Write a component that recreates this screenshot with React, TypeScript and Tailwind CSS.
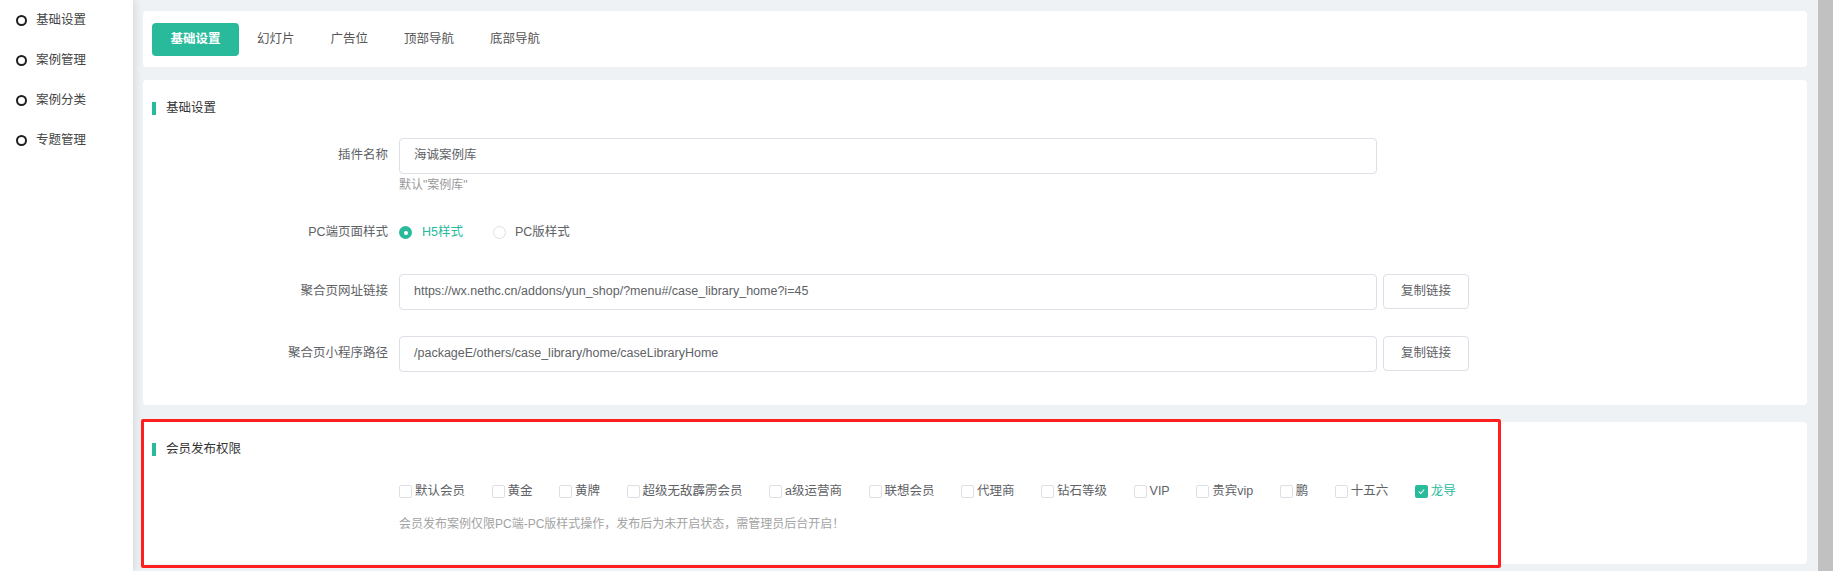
import React from "react";

const teal = "#29ba9c";

const sideItems = ["基础设置", "案例管理", "案例分类", "专题管理"];
const tabs = ["基础设置", "幻灯片", "广告位", "顶部导航", "底部导航"];
const levels = [
  "默认会员",
  "黄金",
  "黄牌",
  "超级无敌霹雳会员",
  "a级运营商",
  "联想会员",
  "代理商",
  "钻石等级",
  "VIP",
  "贵宾vip",
  "鹏",
  "十五六",
  "龙导",
];

export default function App() {
  return (
    <div
      className="flex h-[571px] w-[1833px] overflow-hidden bg-[#eff2f5] text-[12.5px] text-[#606266]"
      style={{ fontFamily: '"Liberation Sans", "Noto Sans CJK SC", sans-serif' }}
    >
      <aside className="relative z-10 w-[133px] shrink-0 bg-white shadow-[2px_0_8px_rgba(0,0,0,0.1)]">
        {sideItems.map((item) => (
          <div key={item} className="flex h-[40px] items-center">
            <span className="ml-[16px] h-[11px] w-[11px] rounded-full border-2 border-[#1f1f1f]" />
            <span className="ml-[9px] text-[#444]">{item}</span>
          </div>
        ))}
      </aside>

      <main className="flex min-w-0 flex-1 flex-col pl-[10px] pr-[11px] pt-[11px]">
        <div className="flex h-[56px] items-center rounded-[4px] bg-white pl-[9px]">
          {tabs.map((tab, i) => (
            <div
              key={tab}
              className={
                i === 0
                  ? "flex h-[33px] w-[87px] items-center justify-center rounded-[4px] bg-[#29ba9c] font-semibold text-white"
                  : "flex h-[33px] items-center px-[18px] text-[#555]"
              }
            >
              {tab}
            </div>
          ))}
        </div>

        <section className="mt-[13px] h-[325px] rounded-[4px] bg-white pt-[19px]">
          <SectionTitle>基础设置</SectionTitle>

          <div className="mt-[20px] flex">
            <Label>插件名称</Label>
            <div>
              <Input value="海诚案例库" />
              <p className="mt-[4px] text-[12px] leading-[14px] text-[#999]">默认"案例库"</p>
            </div>
          </div>

          <div className="mt-[34px] flex h-[14px] items-center">
            <Label>PC端页面样式</Label>
            <div className="flex items-center">
              <span className="flex h-[13px] w-[13px] items-center justify-center rounded-full bg-[#29ba9c]">
                <span className="h-[4px] w-[4px] rounded-full bg-white" />
              </span>
              <span className="ml-[10px] text-[#29ba9c]">H5样式</span>
              <span className="ml-[30px] h-[13px] w-[13px] rounded-full border border-[#dcdfe6]" />
              <span className="ml-[9px]">PC版样式</span>
            </div>
          </div>

          <div className="mt-[34px] flex items-center">
            <Label>聚合页网址链接</Label>
            <Input value="https://wx.nethc.cn/addons/yun_shop/?menu#/case_library_home?i=45" />
            <CopyButton />
          </div>

          <div className="mt-[26px] flex items-center">
            <Label>聚合页小程序路径</Label>
            <Input value="/packageE/others/case_library/home/caseLibraryHome" />
            <CopyButton />
          </div>
        </section>

        <section className="relative mt-[17px] h-[142px] rounded-[4px] bg-white pt-[18px]">
          <SectionTitle>会员发布权限</SectionTitle>

          <div className="ml-[256px] mt-[26px] flex h-[14px] items-center">
            {levels.map((level) => {
              const checked = level === "龙导";
              return (
                <label key={level} className="mr-[26.5px] flex items-center">
                  {checked ? (
                    <span className="flex h-[13px] w-[13px] items-center justify-center rounded-[2px] bg-[#29ba9c]">
                      <svg viewBox="0 0 10 10" className="h-[9px] w-[9px]" fill="none">
                        <path d="M2 5.2 4.2 7.3 8 2.8" stroke="white" strokeWidth="1.2" />
                      </svg>
                    </span>
                  ) : (
                    <span className="h-[13px] w-[13px] rounded-[2px] border border-[#dcdfe6] bg-white" />
                  )}
                  <span className={checked ? "ml-[3px] text-[#29ba9c]" : "ml-[3px]"}>{level}</span>
                </label>
              );
            })}
          </div>

          <p className="ml-[256px] mt-[18px] text-[12px] leading-[14px] text-[#a3a3a3]">
            会员发布案例仅限PC端-PC版样式操作，发布后为未开启状态，需管理员后台开启！
          </p>

          <div className="pointer-events-none absolute left-[-2px] top-[-3px] h-[149px] w-[1360px] rounded-[2px] border-[3px] border-[#ff1f1f]" />
        </section>
      </main>

      <div className="w-[15px] shrink-0 bg-[#c1c1c1]" />
    </div>
  );
}

const SectionTitle = ({ children }: { children: React.ReactNode }) => (
  <div className="flex items-center pl-[9px]">
    <span className="h-[13px] w-[4px]" style={{ backgroundColor: teal }} />
    <span className="ml-[10px] text-[#333]">{children}</span>
  </div>
);

const Label = ({ children }: { children: React.ReactNode }) => (
  <div className="flex h-[36px] w-[256px] shrink-0 items-center justify-end pr-[11px] text-[#606266]">
    {children}
  </div>
);

const Input = ({ value }: { value: string }) => (
  <div className="flex h-[36px] w-[978px] items-center rounded-[4px] border border-[#dcdfe6] bg-white px-[14px] text-[#606266]">
    {value}
  </div>
);

const CopyButton = () => (
  <div className="ml-[6px] flex h-[35px] w-[86px] items-center justify-center rounded-[4px] border border-[#dcdfe6] bg-white text-[#606266]">
    复制链接
  </div>
);
